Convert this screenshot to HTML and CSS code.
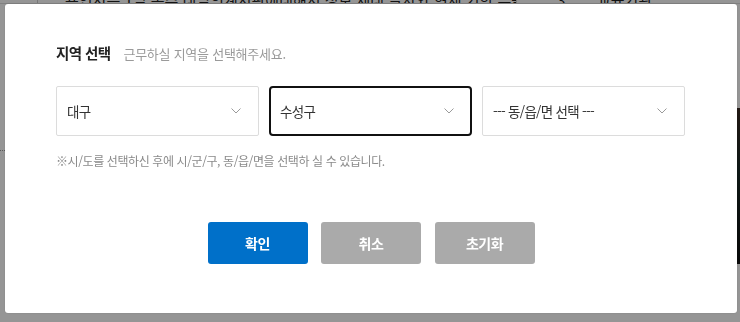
FILE: index.html
```html
<!DOCTYPE html>
<html lang="ko">
<head>
<meta charset="utf-8">
<title>지역 선택</title>
<link rel="stylesheet" href="styles.css">
</head>
<body>
<div class="page">
  <div class="row">
    <span class="cell-a"></span>
    <span class="cell-text">용인시는 1일 동주 내일의계시판에대해서 정보 세대 글자와 현재 기한 우울이</span>
    <span class="cell-num">3</span>
    <span class="cell-tail">교육기관</span>
  </div>
  <div class="side-line"></div>
  <div class="side-image"></div>
</div>

<div class="overlay">
  <div class="modal">
    <div class="head">
      <h2 class="title">지역 선택</h2>
      <p class="sub">근무하실 지역을 선택해주세요.</p>
    </div>

    <div class="selects">
      <div class="select">
        <span class="select-text">대구</span>
        <svg class="chev" width="10" height="6" viewBox="0 0 10 6"><polyline points="0.5,0.5 5,5 9.5,0.5" fill="none" stroke="#9a9a9a" stroke-width="1"/></svg>
      </div>
      <div class="select active">
        <span class="select-text">수성구</span>
        <svg class="chev" width="10" height="6" viewBox="0 0 10 6"><polyline points="0.5,0.5 5,5 9.5,0.5" fill="none" stroke="#9a9a9a" stroke-width="1"/></svg>
      </div>
      <div class="select">
        <span class="select-text">--- 동/읍/면 선택 ---</span>
        <svg class="chev" width="10" height="6" viewBox="0 0 10 6"><polyline points="0.5,0.5 5,5 9.5,0.5" fill="none" stroke="#9a9a9a" stroke-width="1"/></svg>
      </div>
    </div>

    <p class="note">※시/도를 선택하신 후에 시/군/구, 동/읍/면을 선택하 실 수 있습니다.</p>

    <div class="buttons">
      <button class="btn primary">확인</button>
      <button class="btn gray">취소</button>
      <button class="btn gray">초기화</button>
    </div>
  </div>
</div>
</body>
</html>
```

FILE: styles.css
```css
* { box-sizing: border-box; }

html, body {
  margin: 0;
  padding: 0;
  width: 740px;
  height: 322px;
  overflow: hidden;
  background: #ffffff;
  font-family: "Noto Sans CJK KR", "Noto Sans", sans-serif;
}

/* backdrop page */
.page {
  width: 740px;
  height: 322px;
  position: relative;
}
.row {
  display: flex;
  align-items: flex-end;
  height: 4px;
  overflow: hidden;
  border-bottom: 1px solid #ddd;
  font-size: 15px;
  line-height: 17px;
  color: #222;
}
.cell-a {
  width: 38px;
  height: 100%;
  border-right: 1px solid #ccc;
  margin-right: 27px;
  flex: none;
}
.cell-text {
  width: 452px;
  flex: none;
  white-space: nowrap;
  overflow: hidden;
  border-right: 1px solid #ccc;
  align-self: stretch;
  display: flex;
  align-items: flex-end;
  margin-bottom: -5px;
}
.cell-num {
  margin-left: 40px;
  margin-bottom: -5px;
  width: 40px;
}
.cell-tail {
  margin-bottom: -5px;
}
.side-line {
  position: absolute;
  left: 0;
  top: 150px;
  width: 5px;
  border-top: 1px dotted #999;
}
.side-image {
  position: absolute;
  right: 0;
  top: 108px;
  width: 4px;
  height: 156px;
  background: linear-gradient(#3a2a22, #1a2a26 40%, #101010);
}

/* overlay + modal */
.overlay {
  position: fixed;
  inset: 0;
  background: rgba(0, 0, 0, 0.415);
  display: flex;
  padding: 4px 3px 9px 5px;
}
.modal {
  flex: 1;
  background: #fff;
  border-radius: 3px;
  box-shadow: 0 0 2px rgba(0,0,0,0.15);
  padding: 39px 51px 0 51px;
  display: flex;
  flex-direction: column;
}

.head {
  display: flex;
  align-items: baseline;
  gap: 13px;
  height: 20px;
}
.title {
  margin: 0;
  font-size: 14.5px;
  line-height: 20px;
  font-weight: 700;
  color: #222;
  letter-spacing: -0.6px;
}
.sub {
  margin: 0;
  font-size: 13px;
  line-height: 20px;
  color: #9a9a9a;
  letter-spacing: -0.25px;
}

.selects {
  display: flex;
  gap: 10px;
  margin-top: 23px;
}
.select {
  width: 203px;
  height: 50px;
  border: 1px solid #dcdcdc;
  border-radius: 2px;
  display: flex;
  align-items: center;
  justify-content: space-between;
  padding: 0 17px 0 10px;
}
.select.active {
  border: 2px solid #111;
  border-radius: 4px;
  padding: 0 16px 0 9px;
}
.select-text {
  font-size: 13.5px;
  color: #333;
  letter-spacing: -0.7px;
  white-space: nowrap;
}
.chev {
  display: block;
  flex: none;
}

.note {
  margin: 17px 0 0;
  font-size: 12px;
  line-height: 16px;
  color: #8a8a8a;
  letter-spacing: -0.4px;
}

.buttons {
  display: flex;
  justify-content: center;
  gap: 13.5px;
  margin-top: 53px;
}
.btn {
  width: 100px;
  height: 42px;
  border: 0;
  border-radius: 3px;
  font-family: inherit;
  font-size: 14px;
  font-weight: 700;
  color: #fff;
  letter-spacing: -0.5px;
  cursor: pointer;
}
.btn.primary { background: #0070c9; }
.btn.gray { background: #aaaaaa; }
```
